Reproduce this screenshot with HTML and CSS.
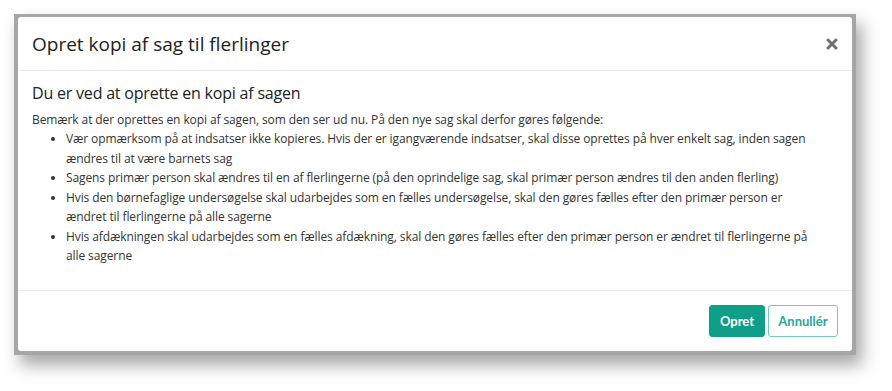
FILE: index.html
```html
<!DOCTYPE html>
<html lang="da">
  <head>
    <meta charset="UTF-8" />
    <title>Opret kopi af sag til flerlinger</title>
    <link rel="stylesheet" href="styles.css">
  </head>
  <body>
    <div class="backdrop">
      <div class="modal">
        <div class="modal-header">
          <h2 class="modal-title">Opret kopi af sag til flerlinger</h2>
          <button type="button" class="close" aria-label="Luk">
            <svg width="12" height="12" viewBox="0 0 12 12">
              <path d="M2 2 L10 10 M10 2 L2 10" stroke="#6f6f6f" stroke-width="3" stroke-linecap="round" />
            </svg>
          </button>
        </div>

        <div class="modal-body">
          <h4>Du er ved at oprette en kopi af sagen</h4>
          <p>Bemærk at der oprettes en kopi af sagen, som den ser ud nu. På den nye sag skal derfor gøres følgende:</p>
          <ul>
            <li>Vær opmærksom på at indsatser ikke kopieres. Hvis der er igangværende indsatser, skal disse oprettes på hver enkelt sag, inden sagen ændres til at være barnets sag</li>
            <li>Sagens primær person skal ændres til en af flerlingerne (på den oprindelige sag, skal primær person ændres til den anden flerling)</li>
            <li>Hvis den børnefaglige undersøgelse skal udarbejdes som en fælles undersøgelse, skal den gøres fælles efter den primær person er ændret til flerlingerne på alle sagerne</li>
            <li>Hvis afdækningen skal udarbejdes som en fælles afdækning, skal den gøres fælles efter den primær person er ændret til flerlingerne på alle sagerne</li>
          </ul>
        </div>

        <div class="modal-footer">
          <button type="button" class="btn btn-primary">Opret</button>
          <button type="button" class="btn btn-outline">Annullér</button>
        </div>
      </div>
    </div>
  </body>
</html>
```

FILE: styles.css
```css
* {
  box-sizing: border-box;
}
body {
  margin: 0;
  width: 892px;
  height: 391px;
  background: #fff;
  font-family: "Open Sans", "Noto Sans", sans-serif;
  color: #333;
  overflow: hidden;
}
.backdrop {
  margin: 14px 0 0 14px;
  width: 842px;
  height: 341px;
  padding: 3px 4px 4px 4px;
  background: #a6a6a6;
  box-shadow: 6px 10px 16px rgb(0 0 0 / 0.35);
}
.modal {
  background: #fff;
  border-radius: 3px;
  height: 100%;
  display: flex;
  flex-direction: column;
}
.modal-header {
  height: 54px;
  display: flex;
  align-items: center;
  justify-content: space-between;
  padding: 0 14px 0 14px;
  border-bottom: 1px solid #ebebeb;
}
.modal-title {
  margin: 0;
  font-size: 19px;
  font-weight: 400;
  color: #222;
}
.close {
  border: none;
  background: none;
  padding: 0;
  display: flex;
  cursor: pointer;
}
.modal-body {
  flex: 1;
  padding: 13px 30px 0 14px;
  font-size: 12px;
  letter-spacing: -0.1px;
  line-height: 19.5px;
}
.modal-body h4 {
  margin: 0 0 6px 0;
  font-size: 16px;
  letter-spacing: -0.2px;
  font-weight: 400;
  color: #222;
}
.modal-body p {
  margin: 0;
}
.modal-body ul {
  margin: 0;
  padding-left: 34px;
}
.modal-footer {
  height: 61px;
  display: flex;
  align-items: center;
  justify-content: flex-end;
  gap: 3px;
  padding: 0 14px;
  border-top: 1px solid #ebebeb;
}
.btn {
  height: 32px;
  border-radius: 3px;
  font-family: Lato, sans-serif;
  font-size: 13px;
  font-weight: 700;
  cursor: pointer;
}
.btn-primary {
  width: 56px;
  background: #0f9e88;
  border: 1px solid #0f9e88;
  color: #fff;
}
.btn-outline {
  width: 70px;
  background: #fff;
  border: 1.5px solid #6fcdc0;
  color: #2aa593;
}
```
